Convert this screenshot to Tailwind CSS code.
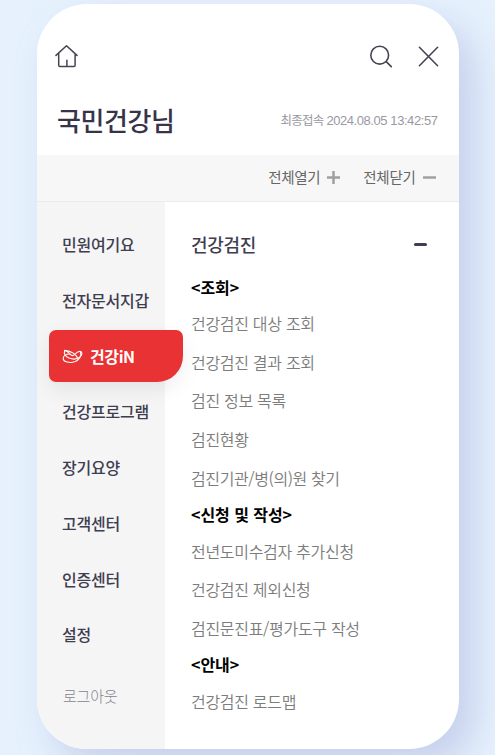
<!DOCTYPE html>
<html lang="ko">
<head>
    <meta charset="UTF-8">
    <meta name="viewport" content="width=device-width, initial-scale=1.0">
    <title>건강iN 전체메뉴</title>
    <script src="https://cdn.jsdelivr.net/npm/@tailwindcss/browser@4"></script>
    <style>
        body {
            font-family: 'Noto Sans CJK KR', sans-serif;
        }
    </style>
</head>
<body class="h-[755px] overflow-hidden bg-[#e6f1fd] pt-1 pl-[37px]">
    <div class="w-[421.5px] h-[745px] rounded-[50px] bg-white shadow-[16px_18px_36px_rgba(150,160,215,0.4)]">
        <div class="flex flex-col h-full rounded-[50px] overflow-hidden whitespace-nowrap">
            <!-- Top icons -->
            <header class="h-[151px] shrink-0 pt-10 pl-[17px] pr-[18.5px]">
                <div class="flex items-center h-6">
                    <svg class="w-6 h-6" viewBox="0 0 24 24" fill="none" stroke="#474354" stroke-width="1.5" stroke-linecap="round" stroke-linejoin="round">
                        <path d="M2 11.4 12.5 1.8 23 11.4M4.7 9.5V21.2Q4.7 22.4 5.9 22.4H19.9Q21.1 22.4 21.1 21.2V9.5M12.9 16.2V22"/>
                    </svg>
                    <svg class="w-6 h-6 ml-auto" viewBox="0 0 24 24" fill="none" stroke="#474354" stroke-width="1.6" stroke-linecap="round">
                        <circle cx="10.7" cy="11.2" r="8.9"/>
                        <path d="M17.2 17.6 22.3 22.6"/>
                    </svg>
                    <svg class="w-6 h-6 ml-[23px]" viewBox="0 0 24 24" fill="none" stroke="#474354" stroke-width="1.6" stroke-linecap="round">
                        <path d="M3.4 3.3 21.6 21.7M21.6 3.3 3.4 21.7"/>
                    </svg>
                </div>
                <div class="flex items-center justify-between h-10 mt-[31px] pl-[3px] pr-[2.5px]">
                    <h1 class="text-[26px] font-medium text-[#37344a] tracking-[-0.4px]">국민건강님</h1>
                    <p class="pt-1 text-[12.5px] text-[#9a98a2] tracking-[-0.7px]">최종접속 <span class="font-['Liberation_Sans'] text-[13px] tracking-[-0.43px]">2024.08.05 13:42:57</span></p>
                </div>
            </header>

            <!-- Open / close all -->
            <div class="flex items-center justify-end h-[46px] shrink-0 pb-0.5 pr-[23px] bg-[#f7f7f7] text-[14.5px] text-[#666] tracking-[-0.3px]">
                <button class="flex items-center gap-[7px]">
                    전체열기
                    <svg class="w-[13px] h-[13px] mt-px" viewBox="0 0 13 13" stroke="#a0a0a0" stroke-width="2.5"><path d="M0 6.5H13M6.5 0V13"/></svg>
                </button>
                <button class="flex items-center gap-[7px] ml-[23px]">
                    전체닫기
                    <svg class="w-[13px] h-[13px] mt-px" viewBox="0 0 13 13" stroke="#a0a0a0" stroke-width="2.5"><path d="M0 6.5H13"/></svg>
                </button>
            </div>

            <div class="flex flex-1 border-t border-[#ececec]">
                <!-- Main menu -->
                <nav class="w-[128px] shrink-0 pt-[14px] bg-[#f5f5f5] text-base font-medium text-[#403d50] tracking-[-0.2px]">
                    <a class="flex items-center h-[55.8px] pl-[25px]">민원여기요</a>
                    <a class="flex items-center h-[55.8px] pl-[25px]">전자문서지갑</a>
                    <a class="flex items-center h-[55.8px] pt-px pl-3">
                        <span class="relative flex items-center w-[134px] h-[52px] shrink-0 pl-[13px] rounded-[7px] rounded-br-[26px] bg-[#e93234] text-white shadow-[0_8px_20px_rgba(0,0,0,0.07)]">
                            <svg class="w-[22px] h-[18px] mr-[6px]" viewBox="0 0 22 18" fill="none" stroke="#fff" stroke-width="1.1" stroke-linecap="round" stroke-linejoin="round">
                                <path d="M2.6 3.4C1.8 6.4 3.4 9.4 7 11C11 12.6 15.6 12.2 18.4 9.6C20.6 7.4 20.4 4.8 18 4.4C14.6 4 12.6 8.6 10.4 8.6C8 8.4 5.6 3 2.6 3.4Z"/>
                                <path d="M7.6 7C4.2 7 1.2 8.8 1.2 11.6C1.4 15.2 8 16.2 12.6 14.8C17.2 13.2 20 9 18.4 4.8"/>
                                <path d="M3.4 3.6C9 3.8 14.6 7.2 16 12.4"/>
                            </svg>
                            <span class="font-bold tracking-[-0.4px]">건강iN</span>
                        </span>
                    </a>
                    <a class="flex items-center h-[55.8px] pl-[25px]">건강프로그램</a>
                    <a class="flex items-center h-[55.8px] pl-[25px]">장기요양</a>
                    <a class="flex items-center h-[55.8px] pl-[25px]">고객센터</a>
                    <a class="flex items-center h-[55.8px] pl-[25px]">인증센터</a>
                    <a class="flex items-center h-[55.8px] pl-[25px]">설정</a>
                    <a class="flex items-center h-[67px] pl-[26px] text-[15px] font-light text-[#85838f] tracking-[-0.2px]">로그아웃</a>
                </nav>

                <!-- Sub menu -->
                <section class="flex-1 pt-[17px] pl-[26px] text-base text-[#7c7c7c] font-[350] tracking-[-0.3px]">
                    <div class="flex items-center justify-between h-[50.5px] pr-8">
                        <h2 class="text-[18px] font-medium text-[#403d50] tracking-[-0.3px]">건강검진</h2>
                        <span class="w-[13px] h-[2.5px] rounded-sm bg-[#403d50]"></span>
                    </div>

                    <h3 class="flex items-center h-[34.4px] font-bold text-black tracking-[-0.05px]">&lt;조회&gt;</h3>
                    <ul>
                        <li class="flex items-center h-[38.6px]">건강검진 대상 조회</li>
                        <li class="flex items-center h-[38.6px]">건강검진 결과 조회</li>
                        <li class="flex items-center h-[38.6px]">검진 정보 목록</li>
                        <li class="flex items-center h-[38.6px]">검진현황</li>
                        <li class="flex items-center h-[38.6px] tracking-[-0.4px]">검진기관/병(의)원 찾기</li>
                    </ul>

                    <h3 class="flex items-center h-[34.4px] font-bold text-black tracking-[-0.05px]">&lt;신청 및 작성&gt;</h3>
                    <ul>
                        <li class="flex items-center h-[38.6px]">전년도미수검자 추가신청</li>
                        <li class="flex items-center h-[38.6px]">건강검진 제외신청</li>
                        <li class="flex items-center h-[38.6px]">검진문진표/평가도구 작성</li>
                    </ul>

                    <h3 class="flex items-center h-[34.4px] font-bold text-black tracking-[-0.05px]">&lt;안내&gt;</h3>
                    <ul>
                        <li class="flex items-center h-[38.6px]">건강검진 로드맵</li>
                    </ul>
                </section>
            </div>
        </div>
    </div>
</body>
</html>
